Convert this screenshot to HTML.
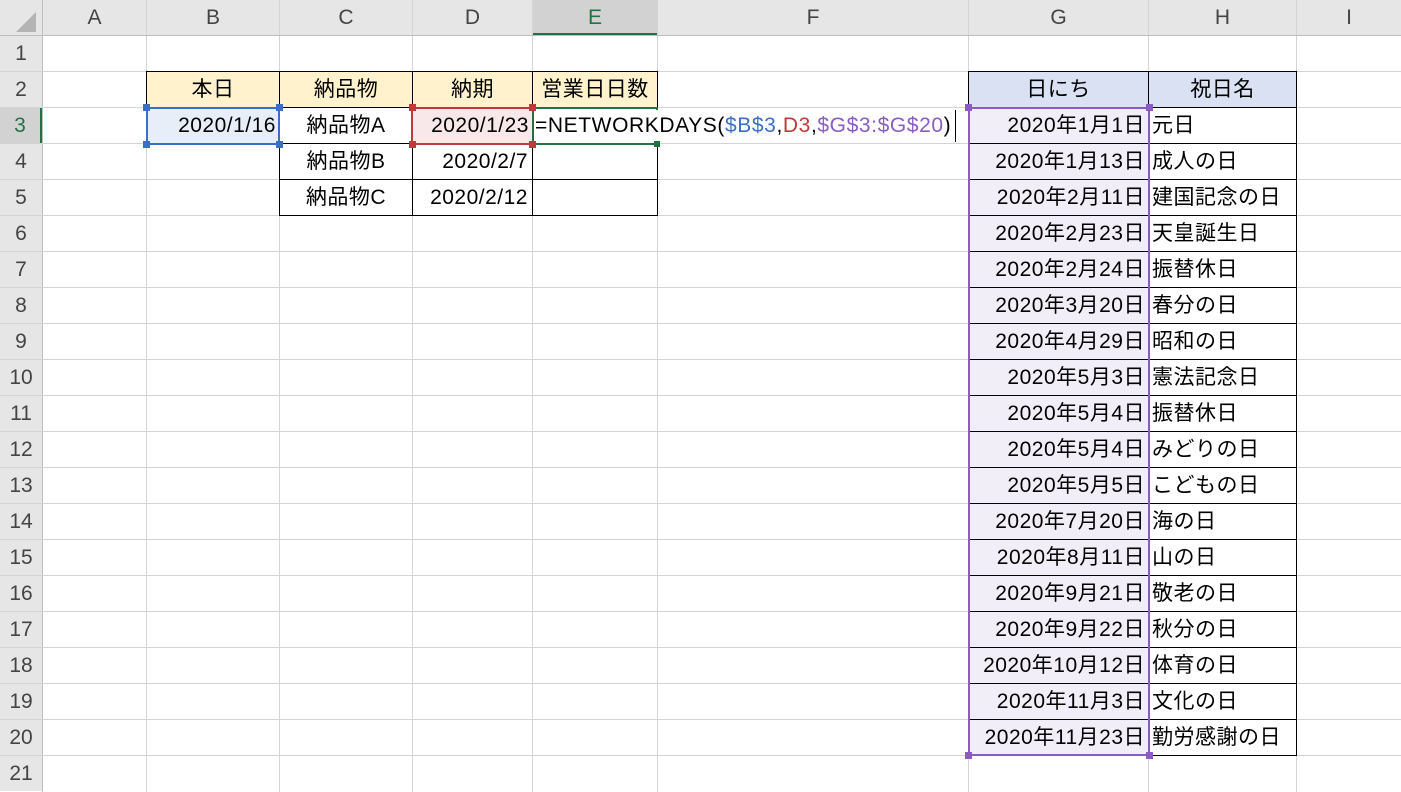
<!DOCTYPE html>
<html><head><meta charset="utf-8"><style>
*{margin:0;padding:0;box-sizing:border-box}
body{width:1401px;height:792px;overflow:hidden;background:#fff;position:relative;font-family:"Liberation Sans","Noto Sans CJK JP",sans-serif;font-size:21px;color:#000}
.v{position:absolute;top:0;height:792px;width:1px;background:#d4d4d4}
.h{position:absolute;left:0;width:1401px;height:1px;background:#d4d4d4}
.ch{position:absolute;top:0;height:35px;background:#e6e6e6;color:#444;text-align:center;line-height:35px;font-size:21px}
.rh{position:absolute;left:0;width:42px;height:35px;background:#e6e6e6;color:#444;text-align:center;line-height:36px;font-size:21px}
.c{position:absolute;height:37px;line-height:36px;white-space:nowrap;border:1px solid #000;padding:0 4px;letter-spacing:0.5px}
.r{text-align:right}.m{text-align:center}
</style></head><body>
<div class="ch" style="left:0;width:42px"></div>
<svg style="position:absolute;left:14px;top:10px" width="24" height="24"><polygon points="22,2 22,22 2,22" fill="#b4b4b4"/></svg>
<div class="ch" style="left:43px;width:103px">A</div>
<div class="ch" style="left:147px;width:132px">B</div>
<div class="ch" style="left:280px;width:132px">C</div>
<div class="ch" style="left:413px;width:119px">D</div>
<div class="ch" style="left:533px;width:124px;background:#d2d2d2;color:#217346;border-bottom:2px solid #217346">E</div>
<div class="ch" style="left:658px;width:310px">F</div>
<div class="ch" style="left:969px;width:179px">G</div>
<div class="ch" style="left:1149px;width:147px">H</div>
<div class="ch" style="left:1297px;width:104px">I</div>
<div class="v" style="left:42px;background:#bdbdbd"></div>
<div class="v" style="left:146px"></div><div class="v" style="left:279px"></div><div class="v" style="left:412px"></div><div class="v" style="left:532px"></div><div class="v" style="left:657px"></div><div class="v" style="left:968px"></div><div class="v" style="left:1148px"></div><div class="v" style="left:1296px"></div>
<div class="h" style="top:35px;background:#bdbdbd"></div>
<div class="h" style="top:71px"></div><div class="h" style="top:107px"></div><div class="h" style="top:143px"></div><div class="h" style="top:179px"></div><div class="h" style="top:215px"></div><div class="h" style="top:251px"></div><div class="h" style="top:287px"></div><div class="h" style="top:323px"></div><div class="h" style="top:359px"></div><div class="h" style="top:395px"></div><div class="h" style="top:431px"></div><div class="h" style="top:467px"></div><div class="h" style="top:503px"></div><div class="h" style="top:539px"></div><div class="h" style="top:575px"></div><div class="h" style="top:611px"></div><div class="h" style="top:647px"></div><div class="h" style="top:683px"></div><div class="h" style="top:719px"></div><div class="h" style="top:755px"></div>
<div class="rh" style="top:36px">1</div><div class="rh" style="top:72px">2</div>
<div class="rh" style="top:108px;background:#d2d2d2;color:#217346;border-right:2px solid #217346">3</div>
<div class="rh" style="top:144px">4</div><div class="rh" style="top:180px">5</div><div class="rh" style="top:216px">6</div><div class="rh" style="top:252px">7</div><div class="rh" style="top:288px">8</div><div class="rh" style="top:324px">9</div><div class="rh" style="top:360px">10</div><div class="rh" style="top:396px">11</div><div class="rh" style="top:432px">12</div><div class="rh" style="top:468px">13</div><div class="rh" style="top:504px">14</div><div class="rh" style="top:540px">15</div><div class="rh" style="top:576px">16</div><div class="rh" style="top:612px">17</div><div class="rh" style="top:648px">18</div><div class="rh" style="top:684px">19</div><div class="rh" style="top:720px">20</div><div class="rh" style="top:756px">21</div>

<div class="c m" style="left:146px;top:71px;width:134px;background:#fff2cc">本日</div>
<div class="c m" style="left:279px;top:71px;width:134px;background:#fff2cc">納品物</div>
<div class="c m" style="left:412px;top:71px;width:121px;background:#fff2cc">納期</div>
<div class="c m" style="left:532px;top:71px;width:126px;background:#fff2cc">営業日日数</div>
<div class="c m" style="left:279px;top:107px;width:134px">納品物A</div>
<div class="c m" style="left:279px;top:143px;width:134px">納品物B</div>
<div class="c m" style="left:279px;top:179px;width:134px">納品物C</div>
<div class="c r" style="left:412px;top:143px;width:121px">2020/2/7</div>
<div class="c r" style="left:412px;top:179px;width:121px">2020/2/12</div>
<div class="c" style="left:532px;top:143px;width:126px"></div>
<div class="c" style="left:532px;top:179px;width:126px"></div>
<div class="c r" style="left:146px;top:107px;width:134px;height:38px;background:#e8eef8;border:2px solid #3a6fc4;padding-right:2px;line-height:34px">2020/1/16</div>
<div class="c r" style="left:411px;top:107px;width:123px;height:38px;background:#f8e8ea;border:2px solid #c0393b;padding-right:3px;line-height:34px">2020/1/23</div>
<div style="position:absolute;left:532px;top:107px;width:126px;height:38px;border:2px solid #217346;background:#fff"></div>
<div style="position:absolute;left:535px;top:110px;height:32px;line-height:32px;white-space:nowrap;background:#fff;padding-right:4px;border-right:1px solid #000;letter-spacing:0.6px">=NETWORKDAYS(<span style="color:#3a6fc4">$B$3</span>,<span style="color:#c0393b">D3</span>,<span style="color:#8a5cc4">$G$3:$G$20</span>)</div>
<div style="position:absolute;left:143px;top:104px;width:7px;height:7px;background:#3a6fc4"></div><div style="position:absolute;left:276px;top:104px;width:7px;height:7px;background:#3a6fc4"></div><div style="position:absolute;left:143px;top:141px;width:7px;height:7px;background:#3a6fc4"></div><div style="position:absolute;left:276px;top:141px;width:7px;height:7px;background:#3a6fc4"></div>
<div style="position:absolute;left:409px;top:104px;width:7px;height:7px;background:#c0393b"></div><div style="position:absolute;left:529px;top:104px;width:7px;height:7px;background:#c0393b"></div><div style="position:absolute;left:409px;top:141px;width:7px;height:7px;background:#c0393b"></div><div style="position:absolute;left:529px;top:141px;width:7px;height:7px;background:#c0393b"></div>
<div style="position:absolute;left:654px;top:141px;width:6px;height:6px;background:#217346"></div>

<div class="c m" style="left:968px;top:71px;width:181px;background:#d9e1f2">日にち</div>
<div class="c m" style="left:1148px;top:71px;width:149px;background:#d9e1f2">祝日名</div>
<div style="position:absolute;left:968px;top:107px;width:182px;height:649px;background:#f1eef8"></div>
<div id="rt"></div>
<script>
var d=["2020年1月1日","2020年1月13日","2020年2月11日","2020年2月23日","2020年2月24日","2020年3月20日","2020年4月29日","2020年5月3日","2020年5月4日","2020年5月4日","2020年5月5日","2020年7月20日","2020年8月11日","2020年9月21日","2020年9月22日","2020年10月12日","2020年11月3日","2020年11月23日"];
var n=["元日","成人の日","建国記念の日","天皇誕生日","振替休日","春分の日","昭和の日","憲法記念日","振替休日","みどりの日","こどもの日","海の日","山の日","敬老の日","秋分の日","体育の日","文化の日","勤労感謝の日"];
var h="";for(var i=0;i<18;i++){var t=107+36*i;
h+='<div class="c r" style="left:968px;top:'+t+'px;width:181px;background:#f1eef8;border-left:none;border-right:none">'+d[i]+'</div>';
h+='<div class="c" style="left:1148px;top:'+t+'px;width:149px;padding-left:3px">'+n[i]+'</div>';}
h+='<div style="position:absolute;left:968px;top:107px;width:182px;height:649px;border:2px solid #8a5cc4"></div>';
[[965,104],[1146,104],[965,752],[1146,752]].forEach(function(p){h+='<div style="position:absolute;left:'+p[0]+'px;top:'+p[1]+'px;width:7px;height:7px;background:#8a5cc4"></div>';});
document.getElementById("rt").innerHTML=h;
</script>
</body></html>
